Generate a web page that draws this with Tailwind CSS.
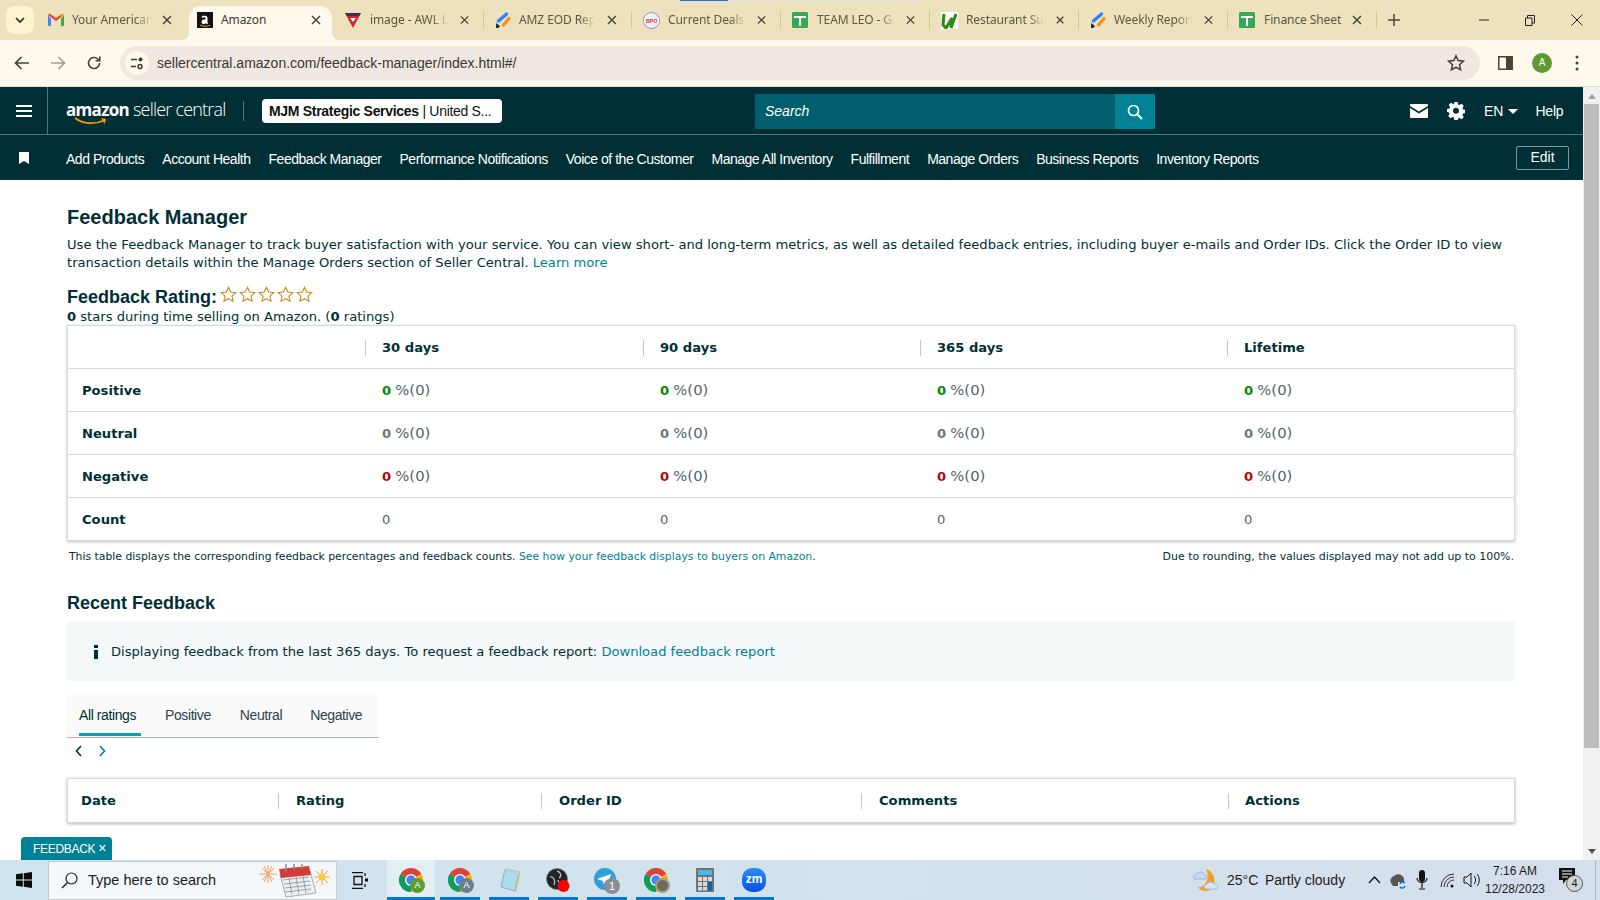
<!DOCTYPE html>
<html lang="en">
<head>
  <meta charset="UTF-8">
  <title>Feedback Manager</title>
  <script src="https://cdn.jsdelivr.net/npm/@tailwindcss/browser@4"></script>
</head>
<body class="w-[1600px] h-[900px] overflow-hidden flex flex-col bg-white font-['Liberation_Sans',sans-serif] text-[#002f36]">
  <svg class="hidden">
    <symbol id="chrome" viewBox="0 0 24 24">
      <path fill="#db4437" d="M12 12 1.600 6A12 12 0 0 1 22.400 6Z"/>
      <path fill="#f4b400" d="M12 12 22.400 6A12 12 0 0 1 12 24Z"/>
      <path fill="#0f9d58" d="M12 12V24A12 12 0 0 1 1.600 6Z"/>
      <circle cx="12" cy="12" r="6" fill="#fff"/><circle cx="12" cy="12" r="4.700" fill="#4285f4"/>
    </symbol>
    <symbol id="close" viewBox="0 0 10 10"><path d="M1 1l8 8M9 1 1 9" stroke="#4a4636" stroke-width="1.500" fill="none"/></symbol>
    <symbol id="sheet" viewBox="0 0 16 16"><rect width="16" height="16" rx="1.500" fill="#34a853"/><path d="M2 5h12M8 5v9" stroke="#fff" stroke-width="2"/></symbol>
    <symbol id="jira" viewBox="0 0 16 16">
      <path d="M11.500 2 3.500 9" stroke="#2684ff" stroke-width="3.200" stroke-linecap="round"/>
      <path d="M14 6.500 8.500 13" stroke="#ff8b1f" stroke-width="3.200" stroke-linecap="round"/>
      <path d="M1 11l4 3-1.500 2H1z" fill="#172b4d"/>
    </symbol>
    <symbol id="star" viewBox="0 0 20 20"><path d="M10 1.500l2.600 5.600 6 .7-4.500 4.100 1.200 6L10 14.900l-5.300 3 1.200-6L1.400 7.800l6-.7z" fill="#fff" stroke="#c9891f" stroke-width="1.300"/></symbol>
  </svg>

  <!-- tab strip -->
  <div class="relative h-[40px] shrink-0 bg-[#ede2bd] flex items-start font-['Noto_Sans',sans-serif] text-[12px] tracking-[-0.1px] text-[#5b5745]">
    <div class="absolute top-0 left-[680px] w-[48px] h-[1px] bg-[#1a73e8]"></div>
    <div class="absolute top-0 left-[728px] w-[192px] h-[1px] bg-[#dfe3e8]"></div>
    <div class="w-[28px] h-[28px] mt-[6px] ml-[6px] mr-[6px] rounded-lg bg-[#fdf3d0] flex items-center justify-center">
      <svg width="10" height="7" viewBox="0 0 10 7"><path d="M1 1l4 4 4-4" stroke="#302c1c" stroke-width="1.700" fill="none"/></svg>
    </div>
    <div class="w-[149px] h-[40px] flex items-center pl-[8px]">
      <svg width="16" height="14" viewBox="0 0 16 14" class="shrink-0"><path d="M0 2v10a1 1 0 0 0 1 1h2V6z" fill="#4285f4"/><path d="M16 2v10a1 1 0 0 1-1 1h-2V6z" fill="#34a853"/><path d="M0 2l8 6 8-6-1.500-1.500L8 5 1.500.5z" fill="#ea4335"/><path d="M13 2.500l2-2L16 2l-3 4z" fill="#fbbc04"/></svg>
      <div class="ml-[8px] w-[80px] whitespace-nowrap [mask-image:linear-gradient(to_right,black_80%,transparent)]">Your American</div>
      <svg width="10" height="10" class="ml-[10px]"><use href="#close"/></svg>
    </div>
    <div class="relative w-[143px] h-[34px] mt-[6px] rounded-t-xl bg-[#fff8ec] flex items-center pl-[8px] pb-[6px] text-[#3c3a30]">
      <div class="absolute -left-[8px] bottom-0 w-[8px] h-[8px] bg-[radial-gradient(circle_at_0_0,transparent_8px,#fff8ec_8px)]"></div>
      <div class="absolute -right-[8px] bottom-0 w-[8px] h-[8px] bg-[radial-gradient(circle_at_100%_0,transparent_8px,#fff8ec_8px)]"></div>
      <svg width="16" height="16" viewBox="0 0 16 16" class="shrink-0">
        <rect width="16" height="16" fill="#111"/>
        <path d="M4.500 5c.5-1.600 5.500-2 6 .5V10c0 .7.300 1 .6 1.300l-1.200 1-.9-1c-1.500 1.300-4.500 1.200-4.500-1.200 0-2.200 2.300-2.800 4-2.800V6c-.2-1-2-1-2.500.1z" fill="#fff"/>
        <path d="M3 13c3 1.700 7 1.700 10 .2" stroke="#f90" fill="none"/>
      </svg>
      <div class="ml-[8px] w-[90px] whitespace-nowrap">Amazon</div>
      <svg width="10" height="10"><use href="#close"/></svg>
    </div>
    <div class="w-[152px] h-[40px] flex items-center pl-[13px]">
      <svg width="16" height="16" viewBox="0 0 16 16" class="shrink-0"><path d="M0 1h16L8 16z" fill="#e01f2d"/><path d="M0 1h16l-2 3H2z" fill="#3a2a55"/><path d="M5 6h6L8 10z" fill="#fff"/></svg>
      <div class="ml-[9px] w-[78px] whitespace-nowrap [mask-image:linear-gradient(to_right,black_80%,transparent)]">image - AWL L</div>
      <svg width="10" height="10" class="ml-[12px]"><use href="#close"/></svg>
      <div class="ml-[14px] w-[1px] h-[18px] bg-[#d9c676]"></div>
    </div>
    <div class="w-[148px] h-[40px] flex items-center pl-[11px]">
      <svg width="16" height="16" class="shrink-0"><use href="#jira"/></svg>
      <div class="ml-[8px] w-[78px] overflow-hidden whitespace-nowrap [mask-image:linear-gradient(to_right,black_80%,transparent)]">AMZ EOD Rep</div>
      <svg width="10" height="10" class="ml-[12px]"><use href="#close"/></svg>
      <div class="ml-[14px] w-[1px] h-[18px] bg-[#d9c676]"></div>
    </div>
    <div class="w-[149px] h-[40px] flex items-center pl-[11px]">
      <svg width="17" height="17" viewBox="0 0 17 17" class="shrink-0"><circle cx="8.500" cy="8.500" r="8" fill="#eef0f5" stroke="#8e94b5"/><rect x="1" y="6" width="15" height="5" fill="#fff"/><text x="8.500" y="10.500" font-size="5.500" font-weight="700" font-style="italic" text-anchor="middle" fill="#d8232a" font-family="Liberation Sans">BPO</text></svg>
      <div class="ml-[8px] w-[78px] whitespace-nowrap [mask-image:linear-gradient(to_right,black_80%,transparent)]">Current Deals -</div>
      <svg width="10" height="10" class="ml-[11px]"><use href="#close"/></svg>
      <div class="ml-[14px] w-[1px] h-[18px] bg-[#d9c676]"></div>
    </div>
    <div class="w-[149px] h-[40px] flex items-center pl-[11px]">
      <svg width="16" height="16" class="shrink-0"><use href="#sheet"/></svg>
      <div class="ml-[9px] w-[78px] whitespace-nowrap [mask-image:linear-gradient(to_right,black_80%,transparent)]">TEAM LEO - Go</div>
      <svg width="10" height="10" class="ml-[11px]"><use href="#close"/></svg>
      <div class="ml-[14px] w-[1px] h-[18px] bg-[#d9c676]"></div>
    </div>
    <div class="w-[149px] h-[40px] flex items-center pl-[11px]">
      <svg width="17" height="17" viewBox="0 0 17 17" class="shrink-0"><rect width="17" height="17" fill="#fff"/><path d="M3 2 2 13l3 3 6-10-1 10 5-14" fill="none" stroke="#2a8a12" stroke-width="3"/></svg>
      <div class="ml-[8px] w-[78px] whitespace-nowrap [mask-image:linear-gradient(to_right,black_80%,transparent)]">Restaurant Sup</div>
      <svg width="10" height="10" class="ml-[12px]"><use href="#close"/></svg>
      <div class="ml-[14px] w-[1px] h-[18px] bg-[#d9c676]"></div>
    </div>
    <div class="w-[149px] h-[40px] flex items-center pl-[11px]">
      <svg width="16" height="16" class="shrink-0"><use href="#jira"/></svg>
      <div class="ml-[8px] w-[78px] whitespace-nowrap [mask-image:linear-gradient(to_right,black_80%,transparent)]">Weekly Report</div>
      <svg width="10" height="10" class="ml-[12px]"><use href="#close"/></svg>
      <div class="ml-[14px] w-[1px] h-[18px] bg-[#d9c676]"></div>
    </div>
    <div class="w-[149px] h-[40px] flex items-center pl-[11px]">
      <svg width="16" height="16" class="shrink-0"><use href="#sheet"/></svg>
      <div class="ml-[9px] w-[78px] whitespace-nowrap">Finance Sheet</div>
      <svg width="10" height="10" class="ml-[11px]"><use href="#close"/></svg>
      <div class="ml-[14px] w-[1px] h-[18px] bg-[#d9c676]"></div>
    </div>
    <div class="h-[40px] flex items-center ml-[11px]">
      <svg width="12" height="12" viewBox="0 0 12 12"><path d="M6 0v12M0 6h12" stroke="#4a4636" stroke-width="1.500"/></svg>
    </div>
    <div class="absolute right-0 top-0 h-[40px] flex items-center">
      <svg width="10" height="10" class="mr-[36px]" viewBox="0 0 10 10"><path d="M0 5h10" stroke="#222" stroke-width="1"/></svg>
      <svg width="10" height="11" class="mr-[36px]" viewBox="0 0 10 11"><path d="M.5 3h6.500v7.500H.5zM2.500 3V.5h7v7.500H7" stroke="#222" fill="none"/></svg>
      <svg width="12" height="12" class="mr-[17px]" viewBox="0 0 12 12"><path d="M.5.5l11 11M11.500.5l-11 11" stroke="#222"/></svg>
    </div>
  </div>

  <!-- address bar -->
  <div class="h-[47px] shrink-0 bg-[#fff8ec] flex items-center border-b border-[#e6dcc6]">
    <svg width="16" height="14" viewBox="0 0 16 14" class="ml-[14px]"><path d="M15 7H2M7.500 1 1.500 7l6 6" stroke="#46423a" stroke-width="1.700" fill="none"/></svg>
    <svg width="16" height="14" viewBox="0 0 16 14" class="ml-[20px]"><path d="M1 7h13M8.500 1l6 6-6 6" stroke="#a49f94" stroke-width="1.700" fill="none"/></svg>
    <svg width="16" height="16" viewBox="0 0 16 16" class="ml-[20px]"><path d="M13.500 8A5.500 5.500 0 1 1 11.800 4L13.500 5.500M13.800 1.500v4.200H9.600" stroke="#46423a" stroke-width="1.600" fill="none"/></svg>
    <div class="ml-[18px] w-[1360px] h-[34px] rounded-full bg-[#efe8e1] flex items-center pl-[5px] text-[14px] text-[#3b3832]">
      <div class="w-[24px] h-[24px] rounded-full bg-[#fff8ec] flex items-center justify-center">
        <svg width="14" height="14" viewBox="0 0 14 14"><path d="M1 3.500h6M1 10.500h5" stroke="#3b3832" stroke-width="1.400"/><circle cx="10.500" cy="3.500" r="2" fill="#3b3832"/><circle cx="10" cy="10.500" r="2" fill="none" stroke="#3b3832" stroke-width="1.400"/></svg>
      </div>
      <span class="ml-[8px] flex-1">sellercentral.amazon.com/feedback-manager/index.html#/</span>
      <svg width="18" height="18" viewBox="0 0 20 20" class="mr-[15px]"><path d="M10 2l2.400 5.300 5.800.7-4.300 3.900 1.200 5.700-5.100-2.900-5.100 2.900 1.200-5.700L1.800 8l5.800-.7z" fill="none" stroke="#46423a" stroke-width="1.700"/></svg>
    </div>
    <svg width="15" height="14" viewBox="0 0 15 14" class="ml-[18px]"><rect x=".75" y=".75" width="13.500" height="12.500" fill="none" stroke="#4a4636" stroke-width="1.500"/><rect x="8" y="1" width="6" height="12" fill="#4a4636"/></svg>
    <div class="ml-[19px] w-[20px] h-[20px] rounded-full bg-[#5f9b32] text-white text-[10px] leading-[20px] text-center">A</div>
    <svg width="4" height="16" viewBox="0 0 4 16" class="ml-[23px]"><circle cx="2" cy="2" r="1.500" fill="#46423a"/><circle cx="2" cy="8" r="1.500" fill="#46423a"/><circle cx="2" cy="14" r="1.500" fill="#46423a"/></svg>
  </div>

  <!-- page + scrollbar -->
  <div class="relative flex-1 flex min-h-0">
    <div class="w-[1583px] shrink-0 overflow-hidden">
      <header class="h-[48px] bg-[#002f36] border-b border-[#5c7176] flex items-center text-white">
        <div class="w-[48px] h-full border-r border-[#5c7176] flex items-center justify-center">
          <svg width="16" height="12" viewBox="0 0 16 12"><path d="M0 1h16M0 6h16M0 11h16" stroke="#fff" stroke-width="2"/></svg>
        </div>
        <div class="relative ml-[18px] w-[177px] h-[30px] font-['Open_Sans',sans-serif] leading-[27px] whitespace-nowrap">
          <span class="font-bold text-[17px] tracking-[-0.7px]">amazon</span><span class="ml-[4px] font-light text-[18px] tracking-[-0.8px]">seller central</span>
          <svg width="34" height="9" viewBox="0 0 34 9" class="absolute left-[8px] top-[21px]"><path d="M1 1c8 6 20 7 30 2" stroke="#f90" stroke-width="1.800" fill="none"/><path d="M27 1l5 1-1.500 5z" fill="#f90"/></svg>
        </div>
        <div class="w-[1px] h-[20px] bg-[#5c7176]"></div>
        <div class="ml-[18px] w-[240px] h-[24px] rounded-sm bg-white text-[#111] text-[14px] tracking-[-0.3px] leading-[24px] pl-[7px] whitespace-nowrap">
          <b>MJM Strategic Services</b> | United S...
        </div>
        <div class="ml-[253px] mt-[2px] w-[360px] h-[35px] bg-[#005e6e] text-[14px] italic leading-[35px] pl-[10px]">Search</div>
        <div class="mt-[2px] w-[40px] h-[35px] bg-[#008296] flex items-center justify-center">
          <svg width="16" height="16" viewBox="0 0 16 16"><circle cx="6.500" cy="6.500" r="5" fill="none" stroke="#fff" stroke-width="1.700"/><path d="M10 10l5 5" stroke="#fff" stroke-width="2"/></svg>
        </div>
        <svg width="18" height="14" viewBox="0 0 18 14" class="ml-[255px] mt-[1px]"><path d="M1 0h16a1 1 0 0 1 1 1v1L9 7.500 0 2V1a1 1 0 0 1 1-1zM0 4l9 5.500L18 4v9a1 1 0 0 1-1 1H1a1 1 0 0 1-1-1z" fill="#fff"/></svg>
        <svg width="18" height="18" viewBox="0 0 18 18" class="ml-[19px] mt-[1px]"><path fill="#fff" fill-rule="evenodd" d="M7.400 0h3.200l.4 2.400 1.500.7 2-1.400 2.300 2.300-1.400 2 .7 1.500 2.400.4v3.200l-2.400.4-.7 1.500 1.400 2-2.300 2.300-2-1.400-1.500.7-.4 2.400H7.400L7 15.600l-1.500-.7-2 1.400-2.300-2.300 1.400-2-.7-1.500L0 10.100V6.900l2.400-.4.700-1.500-1.400-2L4 .7l2 1.400L7 2.400zM9 5.800a3 3 0 1 0 0 6 3 3 0 0 0 0-6z"/></svg>
        <span class="ml-[19px] mt-[1px] text-[14px]">EN</span>
        <svg width="10" height="5" viewBox="0 0 10 5" class="ml-[5px] mt-[1px]"><path d="M0 0h10L5 5z" fill="#fff"/></svg>
        <span class="ml-[17px] mt-[1px] text-[14px] tracking-[-0.2px]">Help</span>
      </header>
      <nav class="h-[45px] bg-[#002f36] flex items-center text-white text-[14px] whitespace-nowrap">
        <svg width="10" height="12" viewBox="0 0 10 12" class="ml-[19px]"><path d="M0 0h10v12L5 9l-5 3z" fill="#fff"/></svg>
        <div class="ml-[37px] mt-[4px] flex gap-[18px] tracking-[-0.48px]">
          <span>Add Products</span><span>Account Health</span><span>Feedback Manager</span><span>Performance Notifications</span><span>Voice of the Customer</span><span>Manage All Inventory</span><span>Fulfillment</span><span>Manage Orders</span><span>Business Reports</span><span>Inventory Reports</span>
        </div>
        <div class="ml-auto mr-[14px] w-[53px] h-[24px] border border-[#879596] rounded-[2px] text-center leading-[20px]">Edit</div>
      </nav>

      <main class="pl-[67px] w-[1515px] font-['DejaVu_Sans',sans-serif] text-[13.120px] text-[#002f36]">
        <h1 class="pt-[25px] h-[49px] font-['Liberation_Sans',sans-serif] text-[20px] leading-[24px] font-bold">Feedback Manager</h1>
        <p class="mt-[7px] leading-[18px]">Use the Feedback Manager to track buyer satisfaction with your service. You can view short- and long-term metrics, as well as detailed feedback entries, including buyer e-mails and Order IDs. Click the Order ID to view transaction details within the Manage Orders section of Seller Central. <a class="text-[#008296]">Learn more</a></p>
        <div class="mt-[14px] h-[22px] flex items-center">
          <h2 class="font-['Liberation_Sans',sans-serif] text-[18px] font-bold leading-[22px]">Feedback Rating:</h2>
          <div class="ml-[3px] -mt-[5px] flex gap-[2px]">
            <svg width="17" height="17"><use href="#star"/></svg>
            <svg width="17" height="17"><use href="#star"/></svg>
            <svg width="17" height="17"><use href="#star"/></svg>
            <svg width="17" height="17"><use href="#star"/></svg>
            <svg width="17" height="17"><use href="#star"/></svg>
          </div>
        </div>
        <p class="h-[17px] leading-[17px]"><b>0</b> stars during time selling on Amazon. (<b>0</b> ratings)</p>

        <div class="border border-[#d5dbdb] shadow-[0_1px_3px_rgba(0,0,0,0.25)]">
          <div class="h-[42px] pt-[1px] grid grid-cols-[297px_278px_277px_307px_1fr] items-center font-bold">
            <div></div>
            <div class="border-l border-[#c4c9c9] pl-[16px] h-[16px] leading-[16px]">30 days</div>
            <div class="border-l border-[#c4c9c9] pl-[16px] h-[16px] leading-[16px]">90 days</div>
            <div class="border-l border-[#c4c9c9] pl-[16px] h-[16px] leading-[16px]">365 days</div>
            <div class="pl-[16px] border-l border-[#c4c9c9] h-[16px] leading-[16px]">Lifetime</div>
          </div>
          <div class="h-[43px] pt-[1px] grid grid-cols-[297px_278px_277px_307px_1fr] items-center border-t border-[#d5dbdb]">
            <div class="pl-[14px] font-bold">Positive</div>
            <div class="pl-[17px] text-[#56636a]"><b class="text-[#008a00]">0</b> <span class="text-[14.800px]">%(0)</span></div>
            <div class="pl-[17px] text-[#56636a]"><b class="text-[#008a00]">0</b> <span class="text-[14.800px]">%(0)</span></div>
            <div class="pl-[17px] text-[#56636a]"><b class="text-[#008a00]">0</b> <span class="text-[14.800px]">%(0)</span></div>
            <div class="pl-[17px] text-[#56636a]"><b class="text-[#008a00]">0</b> <span class="text-[14.800px]">%(0)</span></div>
          </div>
          <div class="h-[43px] pt-[1px] grid grid-cols-[297px_278px_277px_307px_1fr] items-center border-t border-[#d5dbdb]">
            <div class="pl-[14px] font-bold">Neutral</div>
            <div class="pl-[17px] text-[#56636a]"><b class="text-[#6c7778]">0</b> <span class="text-[14.800px]">%(0)</span></div>
            <div class="pl-[17px] text-[#56636a]"><b class="text-[#6c7778]">0</b> <span class="text-[14.800px]">%(0)</span></div>
            <div class="pl-[17px] text-[#56636a]"><b class="text-[#6c7778]">0</b> <span class="text-[14.800px]">%(0)</span></div>
            <div class="pl-[17px] text-[#56636a]"><b class="text-[#6c7778]">0</b> <span class="text-[14.800px]">%(0)</span></div>
          </div>
          <div class="h-[43px] pt-[1px] grid grid-cols-[297px_278px_277px_307px_1fr] items-center border-t border-[#d5dbdb]">
            <div class="pl-[14px] font-bold">Negative</div>
            <div class="pl-[17px] text-[#56636a]"><b class="text-[#ad0a0a]">0</b> <span class="text-[14.800px]">%(0)</span></div>
            <div class="pl-[17px] text-[#56636a]"><b class="text-[#ad0a0a]">0</b> <span class="text-[14.800px]">%(0)</span></div>
            <div class="pl-[17px] text-[#56636a]"><b class="text-[#ad0a0a]">0</b> <span class="text-[14.800px]">%(0)</span></div>
            <div class="pl-[17px] text-[#56636a]"><b class="text-[#ad0a0a]">0</b> <span class="text-[14.800px]">%(0)</span></div>
          </div>
          <div class="h-[43px] pt-[1px] grid grid-cols-[297px_278px_277px_307px_1fr] items-center border-t border-[#d5dbdb]">
            <div class="pl-[14px] font-bold">Count</div>
            <div class="pl-[17px] text-[#56636a]">0</div>
            <div class="pl-[17px] text-[#56636a]">0</div>
            <div class="pl-[17px] text-[#56636a]">0</div>
            <div class="pl-[17px] text-[#56636a]">0</div>
          </div>
        </div>

        <div class="mt-[8px] h-[16px] pl-[2px] pr-[1px] flex justify-between text-[10.840px] leading-[16px]">
          <span>This table displays the corresponding feedback percentages and feedback counts. <a class="text-[#008296]">See how your feedback displays to buyers on Amazon</a>.</span>
          <span class="text-[10.950px]">Due to rounding, the values displayed may not add up to 100%.</span>
        </div>

        <h2 class="mt-[26px] h-[24px] font-['Liberation_Sans',sans-serif] text-[18px] font-bold leading-[24px]">Recent Feedback</h2>
        <div class="mt-[6px] h-[60px] bg-[#f5f8f8] flex items-center pl-[27px] pt-[2px]">
          <svg width="4" height="14" viewBox="0 0 4 14"><rect width="4" height="3" fill="#002f36"/><rect y="5" width="4" height="9" fill="#002f36"/></svg>
          <span class="ml-[13px] text-[13.100px]">Displaying feedback from the last 365 days. To request a feedback report: <a class="text-[#008296]">Download feedback report</a></span>
        </div>

        <div class="mt-[14px] w-[312px] h-[43px] bg-[#fafafa] border-b border-[#aab7b8] flex font-['Liberation_Sans',sans-serif] text-[14px] tracking-[-0.4px] text-[#2c4349]">
          <div class="ml-[12px] w-[62px] h-[41px] border-b-[3px] border-[#00a4b4] pt-[12px] leading-[16px] text-[#002f36]">All ratings</div>
          <div class="ml-[24px] pt-[12px] leading-[16px]">Positive</div>
          <div class="ml-[29px] pt-[12px] leading-[16px]">Neutral</div>
          <div class="ml-[28px] pt-[12px] leading-[16px]">Negative</div>
        </div>
        <div class="mt-[7px] h-[12px] flex items-center pl-[8px] gap-[17px]">
          <svg width="7" height="12" viewBox="0 0 7 12"><path d="M6 1 1.500 6 6 11" fill="none" stroke="#002f36" stroke-width="1.600"/></svg>
          <svg width="7" height="12" viewBox="0 0 7 12"><path d="M1 1l4.500 5L1 11" fill="none" stroke="#008296" stroke-width="1.600"/></svg>
        </div>

        <div class="mt-[21px] h-[45px] border border-[#d5dbdb] shadow-[0_1px_3px_rgba(0,0,0,0.3)] grid grid-cols-[210px_263px_320px_367px_1fr] items-center font-bold">
          <div class="pl-[13px]">Date</div>
          <div class="border-l border-[#c4c9c9] pl-[17px] h-[16px] leading-[16px]">Rating</div>
          <div class="border-l border-[#c4c9c9] pl-[17px] h-[16px] leading-[16px]">Order ID</div>
          <div class="border-l border-[#c4c9c9] pl-[17px] h-[16px] leading-[16px]">Comments</div>
          <div class="border-l border-[#c4c9c9] pl-[16px] h-[16px] leading-[16px]">Actions</div>
        </div>
      </main>
    </div>

    <div class="w-[17px] bg-[#f1f1f1] flex flex-col items-center">
      <svg width="8" height="5" viewBox="0 0 8 5" class="mt-[7px]"><path d="M4 0l4 5H0z" fill="#a3a3a3"/></svg>
      <div class="mt-[5px] w-[15px] h-[644px] bg-[#bdbdbd]"></div>
      <svg width="8" height="5" viewBox="0 0 8 5" class="mt-auto mb-[6px]"><path d="M0 0h8L4 5z" fill="#505050"/></svg>
    </div>

    <div class="absolute left-[21px] bottom-0 w-[91px] h-[23px] bg-[#008296] rounded-t-[4px] text-white text-[12px] leading-[23px] pl-[12px] tracking-[-0.3px]">FEEDBACK <span class="text-[14px]">×</span></div>
  </div>

  <!-- windows taskbar -->
  <div class="h-[40px] shrink-0 bg-gradient-to-r from-[#cfe4ee] to-[#d5dfec] flex items-center text-[#1c1c1c]">
    <svg width="16" height="16" viewBox="0 0 16 16" class="ml-[16px]"><path d="M0 2.300 6.800 1.300V7.500H0zM7.800 1.200 16 0v7.500H7.800zM0 8.500h6.800v6.200L0 13.700zM7.800 8.500H16V16l-8.200-1.200z" fill="#0b0b0b"/></svg>
    <div class="ml-[16px] w-[289px] h-[39px] mt-[1px] bg-[#f3f7fa] border border-[#c7ccd1] flex items-center pl-[12px] text-[14.500px]">
      <svg width="17" height="17" viewBox="0 0 17 17"><circle cx="10.500" cy="6.500" r="5.500" fill="none" stroke="#222" stroke-width="1.200"/><path d="M6.500 10.500 1 16" stroke="#222" stroke-width="1.500"/></svg>
      <span class="ml-[10px] mt-[1px]">Type here to search</span>
      <svg width="76" height="34" viewBox="0 0 76 34" class="ml-auto mr-[2px]">
        <g stroke="#f2a25c" stroke-width="1"><path d="M10 1v18M1 10h18M4 4l12 12M16 4 4 16M6 2l8 16M14 2 6 18"/></g>
        <path d="M22 10l30-3 6 22-30 4z" fill="#eceef1" stroke="#a7acb4"/>
        <path d="M21 5l30-3 2 9-30 3z" fill="#d33b3b"/>
        <path d="M25 16l26-3M26 20l26-3M27 24l26-3M27 28l26-3M31 14l3 16M38 13l3 17M45 12l3 17" stroke="#8a8f96" stroke-width=".8"/>
        <path d="M28 0v7M36 0v6M44 0v5" stroke="#8a8f96" stroke-width="1.500"/>
        <g stroke="#f8a13a"><path d="M64 5v16M56 13h16M58 7l12 12M70 7 58 19"/></g>
        <circle cx="64" cy="13" r="3.500" fill="#f8cb3a"/>
      </svg>
    </div>
    <svg width="16" height="17" viewBox="0 0 16 17" class="ml-[15px]"><path d="M0 .500h11M0 16.500h11M2 4.500h8v8H2zM13 1v3M13 12v3" fill="none" stroke="#111" stroke-width="1.300"/><rect x="13" y="6.500" width="3" height="3" fill="#111"/></svg>

    <div class="ml-[19px] flex gap-[9px]">
      <div class="relative -mr-[4px] w-[48px] h-[40px] bg-white/40 border-b-[3px] border-[#0078d4] flex justify-center pt-[8px]">
        <svg width="24" height="24"><use href="#chrome"/></svg>
        <div class="absolute left-[23px] top-[18px] w-[15px] h-[15px] rounded-full bg-[#5f9b32] text-white text-[9px] leading-[15px] text-center">A</div>
      </div>
      <div class="relative w-[40px] h-[40px] border-b-[3px] border-[#0078d4] flex justify-center pt-[8px]">
        <svg width="24" height="24"><use href="#chrome"/></svg>
        <div class="absolute left-[19px] top-[18px] w-[15px] h-[15px] rounded-full bg-[#6c7f8c] text-white text-[9px] leading-[15px] text-center">A</div>
      </div>
      <div class="w-[40px] h-[40px] border-b-[3px] border-[#0078d4] flex justify-center pt-[8px]">
        <svg width="24" height="24" viewBox="0 0 24 24"><path d="M8 1l14 3-4 19-14-4z" fill="#a9dcec" stroke="#8fb0bb"/><path d="M8 1l14 3-.500 2L7.500 3z" fill="#c9ced3"/><path d="M22 4l1 2-4 18-1-1z" fill="#e1b85a"/></svg>
      </div>
      <div class="relative w-[40px] h-[40px] border-b-[3px] border-[#0078d4] flex justify-center pt-[8px]">
        <svg width="24" height="24" viewBox="0 0 24 24"><circle cx="11" cy="11" r="10.500" fill="#232323" stroke="#777" stroke-width=".8"/><path d="M11 3c4 1 5 5 2 7M4 9c3-1 6 3 4 8M18 15c-2 1-6 0-6-3" stroke="#bbb" fill="none" stroke-width="1.300"/><circle cx="17.500" cy="18" r="6" fill="#f00"/></svg>
      </div>
      <div class="relative w-[40px] h-[40px] border-b-[3px] border-[#0078d4] flex justify-center pt-[8px]">
        <svg width="26" height="26" viewBox="0 0 26 26"><circle cx="11" cy="11" r="11" fill="#2f9fd8"/><path d="M3 11l14-5-3 11-3-3-2 2v-3z" fill="#fff"/><circle cx="18" cy="18" r="8" fill="#8a8f96"/><text x="18" y="22" font-size="11" fill="#fff" text-anchor="middle" font-family="Liberation Sans">1</text></svg>
      </div>
      <div class="relative w-[40px] h-[40px] border-b-[3px] border-[#0078d4] flex justify-center pt-[8px]">
        <svg width="24" height="24"><use href="#chrome"/></svg>
        <div class="absolute left-[19px] top-[18px] w-[15px] h-[15px] rounded-full bg-[#6d6a60] border-2 border-[#a59a85]"></div>
      </div>
      <div class="w-[40px] h-[40px] border-b-[3px] border-[#0078d4] flex justify-center pt-[8px]">
        <svg width="18" height="24" viewBox="0 0 18 24"><rect width="18" height="24" rx="1" fill="#6f7478"/><rect x="2" y="2" width="14" height="5" fill="#49b8e8"/><g fill="#d5dbe0"><rect x="2" y="9" width="4" height="4"/><rect x="7" y="9" width="4" height="4"/><rect x="12" y="9" width="4" height="4"/><rect x="2" y="14" width="4" height="4"/><rect x="7" y="14" width="4" height="4"/><rect x="2" y="19" width="4" height="3.500"/><rect x="7" y="19" width="4" height="3.500"/></g><rect x="12" y="14" width="4" height="8.500" fill="#1a5fa8"/></svg>
      </div>
      <div class="w-[40px] h-[40px] border-b-[3px] border-[#0078d4] flex justify-center pt-[8px]">
        <div class="w-[24px] h-[24px] rounded-[10px] bg-gradient-to-b from-[#2d8cff] to-[#0b4fe0] text-white text-[12px] font-bold leading-[23px] text-center">zm</div>
      </div>
    </div>

    <div class="ml-auto flex items-center whitespace-nowrap text-[14px]">
      <svg width="26" height="24" viewBox="0 0 26 24">
        <path d="M13 1c9 3 12 15 4 21-4 2-10 1-12-3 8 1 12-9 8-18z" fill="#f2a024"/>
        <path d="M1 11a3.500 3.500 0 0 1 3-5 4.500 4.500 0 0 1 8 1 3 3 0 0 1 1 4z" fill="#c6d8f5" stroke="#9ab7e6"/>
        <path d="M12 21a3 3 0 0 1 2-5 4 4 0 0 1 7 0 3 3 0 0 1 3 5z" fill="#d6e4f8" stroke="#9ab7e6"/>
      </svg>
      <span class="ml-[8px] w-[30px]">25°C</span>
      <span class="ml-[8px] w-[80px]">Partly cloudy</span>
      <svg width="13" height="8" viewBox="0 0 13 8" class="ml-[23px]"><path d="M1 7l5.500-6L12 7" stroke="#111" stroke-width="1.300" fill="none"/></svg>
      <svg width="17" height="17" viewBox="0 0 17 17" class="ml-[9px]"><path d="M1 11a5 5 0 0 1 3-7 6 6 0 0 1 10 3v3H8v4H3z" fill="#555"/><path d="M10 12a3 3 0 0 1 5-1M15 14a3 3 0 0 1-5 1" stroke="#0078d4" stroke-width="1.500" fill="none"/></svg>
      <svg width="12" height="20" viewBox="0 0 12 20" class="ml-[9px]"><rect x="3" y="0" width="6" height="12" rx="3" fill="#111"/><path d="M1 8c0 6 10 6 10 0M6 13v5M3 19h6" stroke="#111" fill="none" stroke-width="1.200"/></svg>
      <svg width="15" height="15" viewBox="0 0 15 15" class="ml-[12px]"><path d="M1 14A13 13 0 0 1 14 1M4 14A10 10 0 0 1 14 4M7 14a7 7 0 0 1 7-7" stroke="#333" fill="none"/><circle cx="12" cy="13" r="1.500" fill="#111"/></svg>
      <svg width="17" height="18" viewBox="0 0 17 18" class="ml-[8px]"><path d="M1 6h3l4-4v14l-4-4H1zM11 5c2 2 2 6 0 8M14 3c3 3 3 9 0 12" fill="none" stroke="#111"/></svg>
      <div class="w-[70px] text-center text-[12px] leading-[18px]">7:16 AM<br>12/28/2023</div>
      <div class="relative ml-[9px] w-[24px] h-[24px]">
        <svg width="16" height="16" viewBox="0 0 16 16"><path d="M0 0h16v12H7l-3 4v-4H0z" fill="#111"/><path d="M3 3h10M3 6h10M3 9h6" stroke="#fff"/></svg>
        <div class="absolute left-[7px] top-[7px] w-[17px] h-[17px] rounded-full bg-[#d0d5da] border border-[#555] text-[11px] leading-[15px] text-center">4</div>
      </div>
      <div class="ml-[12px] mr-[4px] w-[1px] h-[40px] bg-[#aeb8c2]"></div>
    </div>
  </div>
</body>
</html>
